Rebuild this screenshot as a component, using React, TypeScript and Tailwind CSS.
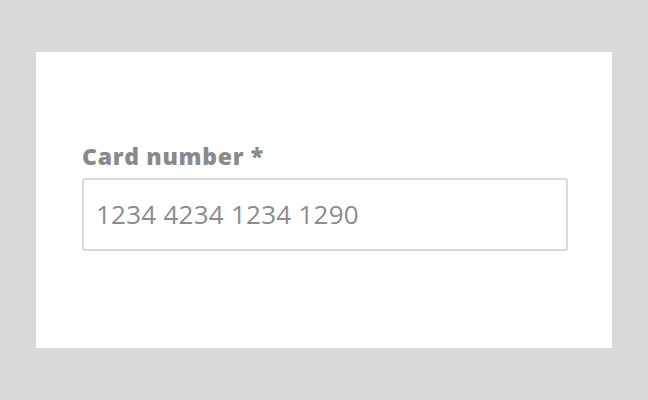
export default function App() {
  return (
    <div className="h-[400px] w-[648px] bg-[#d9d9d9] pl-[36px] pt-[52px] font-['Open_Sans',sans-serif]">
      <div className="h-[296px] w-[576px] bg-white pl-[46px] pr-[44px] pt-[89px]">
        <label className="block text-[23px] font-extrabold leading-[30px] tracking-[0.7px] text-[#8a8a8a]">
          Card number *
        </label>
        <div className="mt-[7px] flex h-[73px] items-center rounded-[3px] border-2 border-[#dadada] pl-[12px]">
          <span className="text-[26px] font-normal tracking-[0.25px] text-[#8c8c8c]">1234 4234 1234 1290</span>
        </div>
      </div>
    </div>
  )
}
